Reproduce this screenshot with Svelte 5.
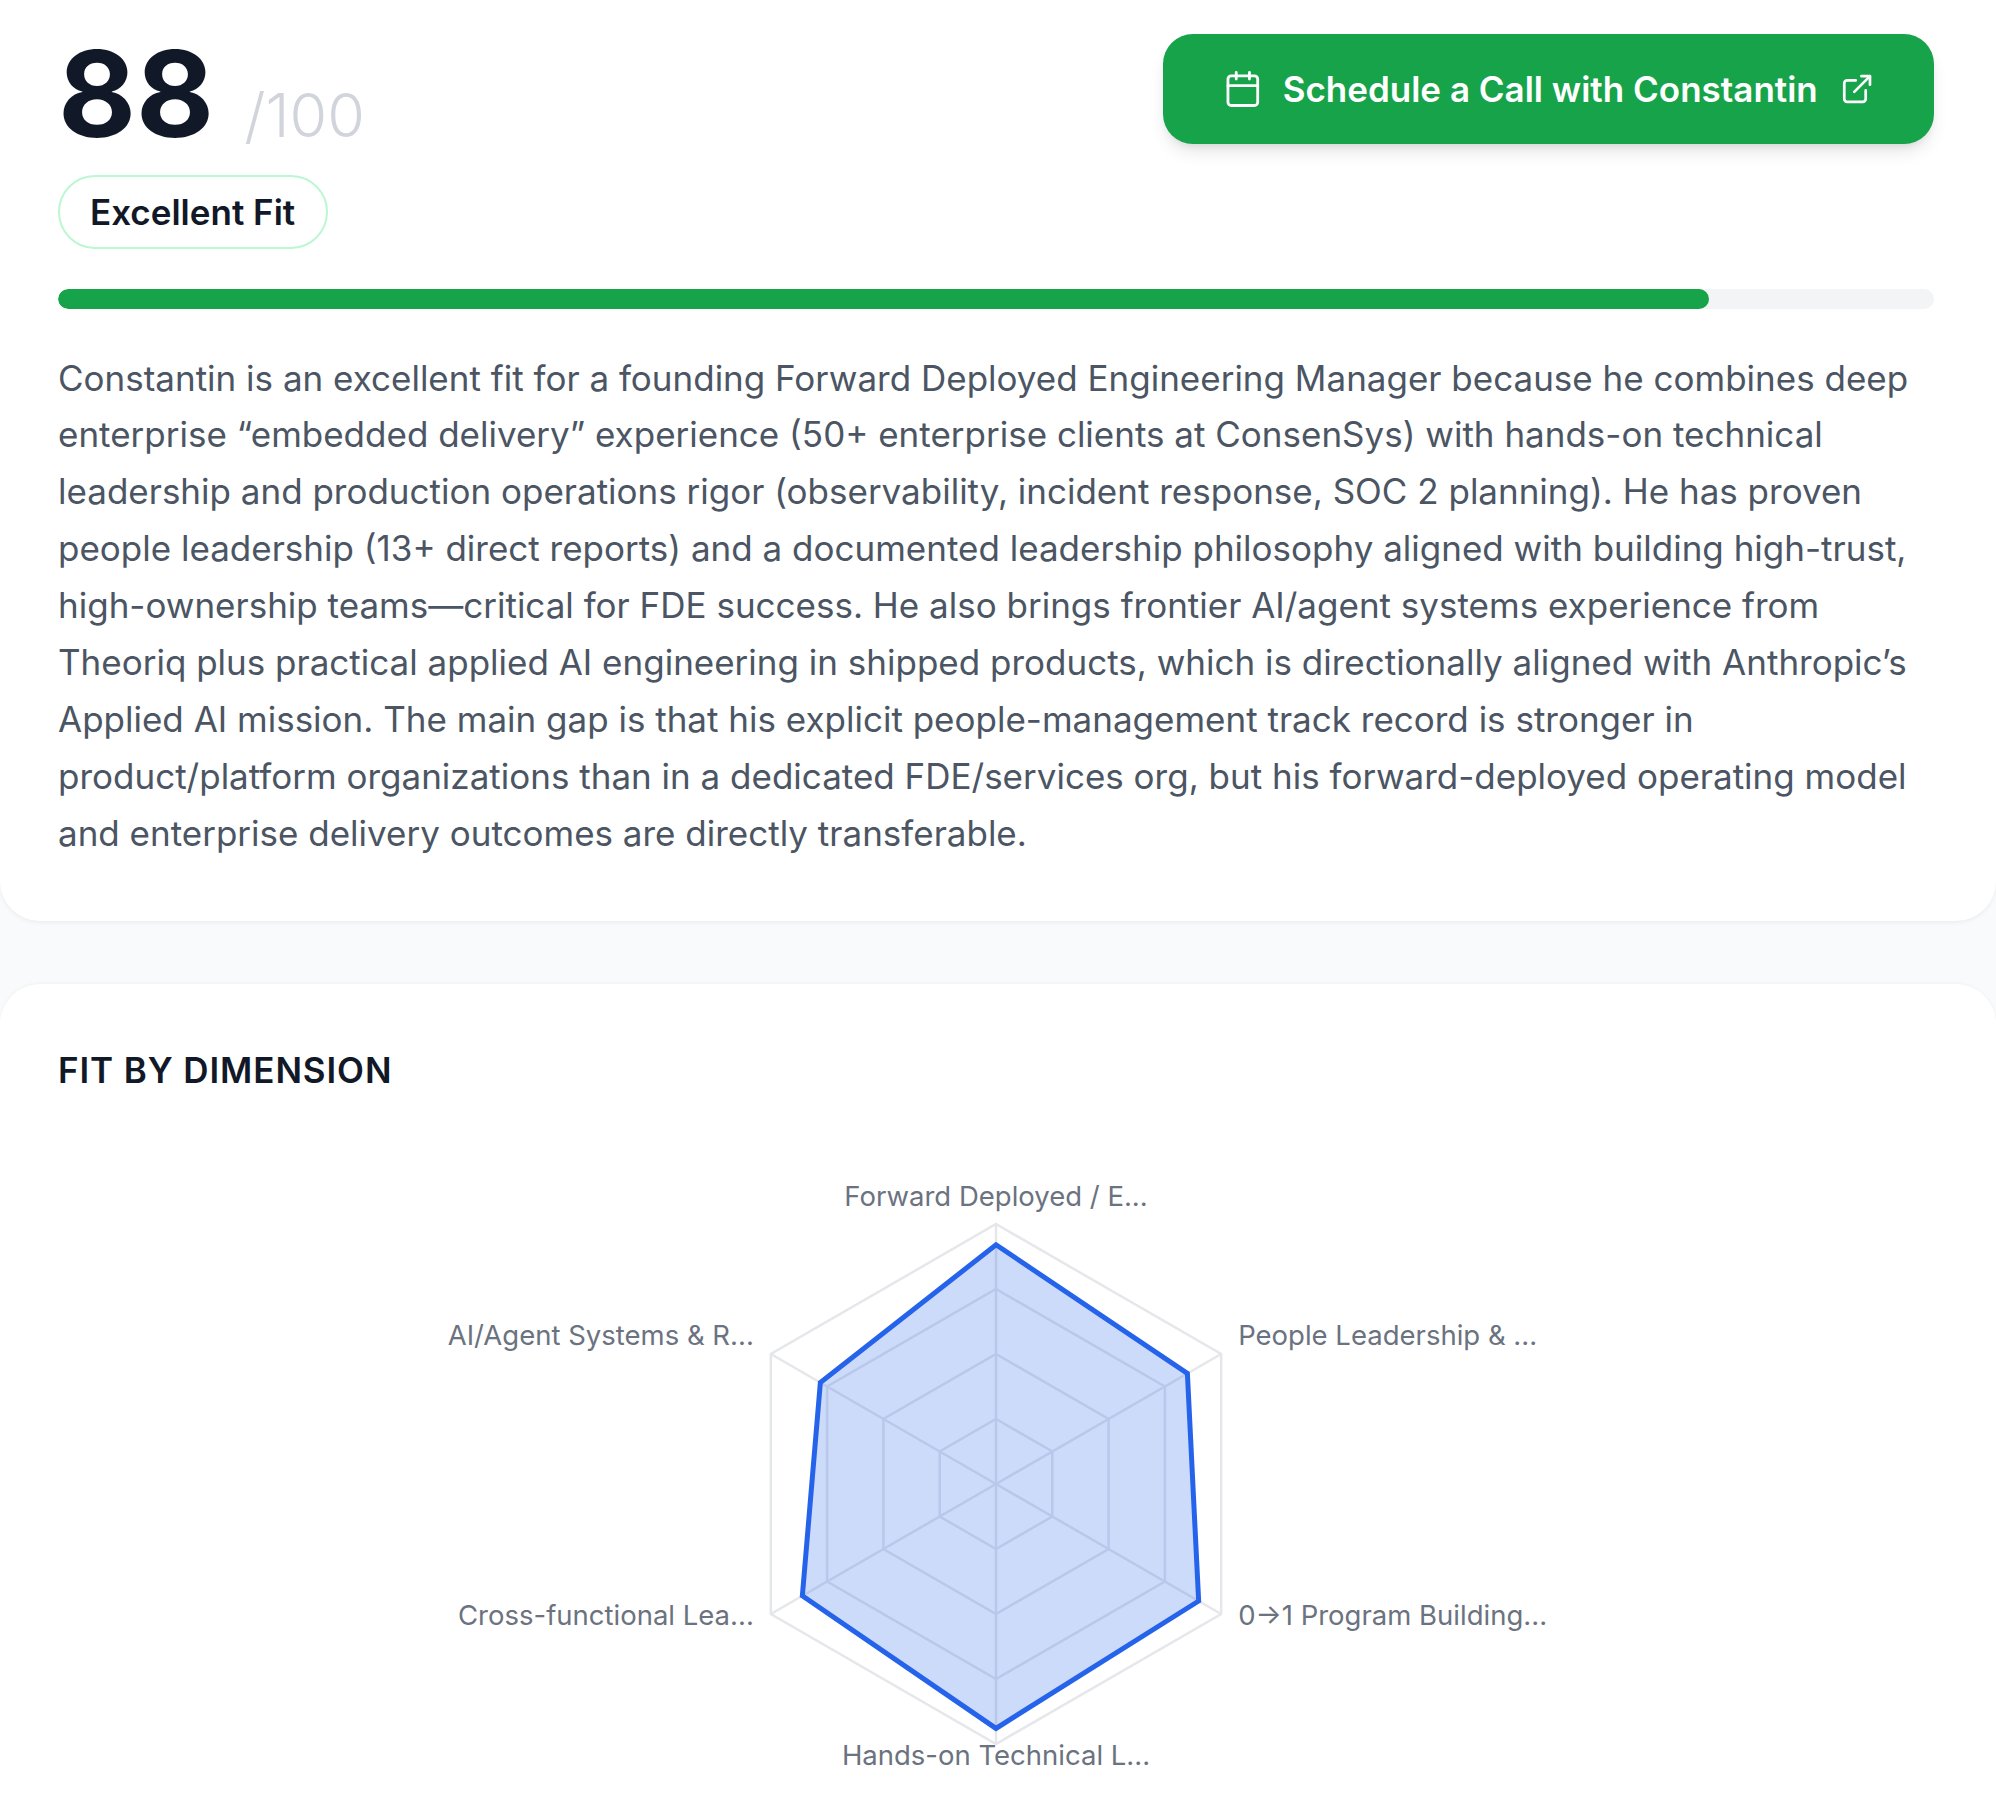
<script lang="ts">
  const summary = `Constantin is an excellent fit for a founding Forward Deployed Engineering Manager because he combines deep enterprise “embedded delivery” experience (50+ enterprise clients at ConsenSys) with hands-on technical leadership and production operations rigor (observability, incident response, SOC 2 planning). He has proven people leadership (13+ direct reports) and a documented leadership philosophy aligned with building high-trust, high-ownership teams—critical for FDE success. He also brings frontier AI/agent systems experience from Theoriq plus practical applied AI engineering in shipped products, which is directionally aligned with Anthropic’s Applied AI mission. The main gap is that his explicit people-management track record is stronger in product/platform organizations than in a dedicated FDE/services org, but his forward-deployed operating model and enterprise delivery outcomes are directly transferable.`

  const score = 88
  const cx = 600
  const cy = 350
  const radius = 260

  const dimensions = [
    { label: 'Forward Deployed / E...', value: 0.92, anchor: 'middle', dx: 0, dy: -18 },
    { label: 'People Leadership & ...', value: 0.85, anchor: 'start', dx: 17, dy: -9 },
    { label: '0→1 Program Building...', value: 0.9, anchor: 'start', dx: 17, dy: 11 },
    { label: 'Hands-on Technical L...', value: 0.94, anchor: 'middle', dx: 0, dy: 21 },
    { label: 'Cross-functional Lea...', value: 0.86, anchor: 'end', dx: -17, dy: 11 },
    { label: 'AI/Agent Systems & R...', value: 0.78, anchor: 'end', dx: -17, dy: -9 }
  ]

  function point(i: number, r: number) {
    const a = (Math.PI / 3) * i - Math.PI / 2
    return { x: cx + r * Math.cos(a), y: cy + r * Math.sin(a) }
  }

  function ring(r: number) {
    return dimensions.map((_, i) => {
      const p = point(i, r)
      return `${p.x},${p.y}`
    }).join(' ')
  }

  const rings = [0.25, 0.5, 0.75, 1]
  const shape = dimensions.map((d, i) => {
    const p = point(i, radius * d.value)
    return `${p.x},${p.y}`
  }).join(' ')
</script>

<div class="page">
  <section class="card summary">
    <div class="top">
      <div>
        <div class="score">
          <span class="num">{score}</span>
          <span class="max">/100</span>
        </div>
        <span class="badge">Excellent Fit</span>
      </div>
      <button class="cta">
        <svg width="44" height="44" viewBox="0 0 24 24" fill="none" stroke="currentColor" stroke-width="1.7" stroke-linecap="round" stroke-linejoin="round">
          <path d="M8 2v4" />
          <path d="M16 2v4" />
          <rect x="3" y="4" width="18" height="18" rx="2" />
          <path d="M3 10h18" />
        </svg>
        <span>Schedule a Call with Constantin</span>
        <svg class="ext" width="38" height="38" viewBox="0 0 24 24" fill="none" stroke="currentColor" stroke-width="1.9" stroke-linecap="round" stroke-linejoin="round">
          <path d="M15 3h6v6" />
          <path d="M10 14 21 3" />
          <path d="M18 13v6a2 2 0 0 1-2 2H5a2 2 0 0 1-2-2V8a2 2 0 0 1 2-2h6" />
        </svg>
      </button>
    </div>
    <div class="track"><div class="fill" style="width: {score}%"></div></div>
    <p class="text">{summary}</p>
  </section>

  <section class="card dims">
    <h2>FIT BY DIMENSION</h2>
    <div class="chart">
      <svg width="1200" height="660" viewBox="0 0 1200 660">
        {#each rings as r}
          <polygon points={ring(radius * r)} fill="none" stroke="#e5e7eb" stroke-width="2.5" />
        {/each}
        {#each dimensions as _, i}
          {@const p = point(i, radius)}
          <line x1={cx} y1={cy} x2={p.x} y2={p.y} stroke="#e5e7eb" stroke-width="2.5" />
        {/each}
        <polygon points={shape} fill="#2563eb" fill-opacity="0.23" stroke="#2563eb" stroke-width="5" />
        {#each dimensions as d, i}
          {@const p = point(i, radius)}
          <text x={p.x + d.dx} y={p.y + d.dy} text-anchor={d.anchor} class="axis">{d.label}</text>
        {/each}
      </svg>
    </div>
  </section>
</div>

<style>
  :global(body) {
    background: #f9fafb;
  }

  .page {
    height: 1798px;
    overflow: hidden;
    font-family: Inter, "Liberation Sans", sans-serif;
    color: #111827;
  }

  .card {
    background: #fff;
    box-sizing: border-box;
  }

  .summary {
    height: 921px;
    padding: 34px 62px 0 58px;
    border-radius: 0 0 40px 40px;
    box-shadow: 0 2px 4px rgba(0, 0, 0, 0.05);
  }

  .top {
    display: flex;
    justify-content: space-between;
    align-items: flex-start;
  }

  .score {
    display: flex;
    align-items: baseline;
    gap: 30px;
    height: 141px;
    margin-top: -3px;
    padding-bottom: 3px;
  }

  .num {
    font-size: 120px;
    font-weight: 700;
    line-height: 126px;
  }

  .max {
    font-size: 61px;
    font-weight: 300;
    color: #d1d5db;
  }

  .badge {
    display: inline-block;
    box-sizing: border-box;
    height: 74px;
    padding: 0 31px 0 30px;
    border: 2.5px solid #bbf7d0;
    border-radius: 37px;
    font-size: 35px;
    font-weight: 600;
    line-height: 71px;
  }

  .cta {
    display: flex;
    align-items: center;
    gap: 20px;
    width: 771px;
    height: 110px;
    padding: 0 60px;
    box-sizing: border-box;
    border: none;
    border-radius: 30px;
    background: #16a34a;
    color: #fff;
    font-family: inherit;
    font-size: 35px;
    font-weight: 600;
    white-space: nowrap;
    box-shadow: 0 10px 18px -4px rgba(0, 0, 0, 0.12), 0 4px 8px -4px rgba(0, 0, 0, 0.1);
  }

  .ext {
    margin-left: 2px;
  }

  .track {
    height: 20px;
    margin-top: 40px;
    background: #f3f4f6;
    border-radius: 10px;
    overflow: hidden;
  }

  .fill {
    height: 100%;
    background: #16a34a;
    border-radius: 10px;
  }

  .text {
    margin: 40.5px 0 0;
    font-size: 35px;
    line-height: 56.9px;
    color: #4b5563;
  }

  .dims {
    margin-top: 63px;
    height: 900px;
    padding: 64px 62px 0 58px;
    border-radius: 40px 40px 0 0;
    box-shadow: 0 -1px 3px rgba(0, 0, 0, 0.04);
  }

  h2 {
    margin: 0;
    font-size: 35px;
    font-weight: 600;
    letter-spacing: 0.9px;
    line-height: 44px;
  }

  .chart {
    display: flex;
    justify-content: center;
    margin-top: 42px;
  }

  .axis {
    font-size: 27.5px;
    fill: #6b7280;
  }
</style>
